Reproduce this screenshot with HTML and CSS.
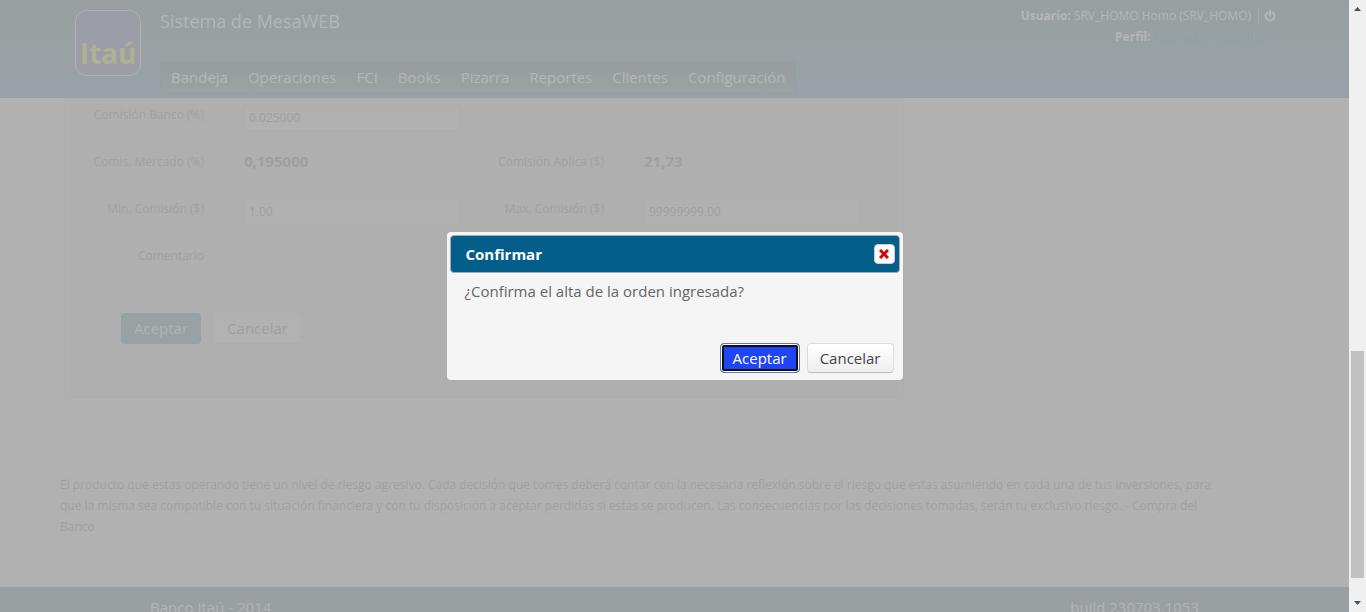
FILE: index.html
```html
<!DOCTYPE html>
<html lang="es">
<head>
<meta charset="utf-8">
<title>Sistema de MesaWEB</title>
<link rel="stylesheet" href="styles.css">
</head>
<body>
<div class="app">
  <header class="header">
    <svg class="logo" viewBox="0 0 66 66" role="img" aria-label="Itaú">
      <rect x="0.5" y="0.5" width="65" height="65" rx="11" fill="#9b9da7" stroke="#b0b2b3"/>
      <text class="logo-text" x="33" y="54" text-anchor="middle">Itaú</text>
    </svg>
    <div class="brand">
      <h1 class="title">Sistema de MesaWEB</h1>
      <nav class="nav">
        <a href="#">Bandeja</a>
        <a href="#">Operaciones</a>
        <a href="#">FCI</a>
        <a href="#">Books</a>
        <a href="#">Pizarra</a>
        <a href="#">Reportes</a>
        <a href="#">Clientes</a>
        <a href="#">Configuración</a>
      </nav>
    </div>
    <div class="user">
      <div class="user-line">
        <span><b>Usuario:</b> SRV_HOMO Homo (SRV_HOMO)</span>
        <a class="logout" href="#" aria-label="Salir">
          <svg viewBox="0 0 12 12" width="12" height="12" fill="none" stroke="currentColor" stroke-width="2" stroke-linecap="round"><path d="M3.400 2.600a4.400 4.400 0 1 0 5.200 0M6 1v4.400"/></svg>
        </a>
      </div>
      <div><b>Perfil:</b> <a class="profile" href="#">OperadorMesaDinero</a></div>
    </div>
  </header>

  <main class="main">
    <form class="panel">
      <div class="row">
        <label class="label" for="banco">Comisión Banco (%)</label>
        <input class="field" id="banco" type="text" value="0.025000">
      </div>
      <div class="row">
        <span class="label">Comis. Mercado (%)</span>
        <output class="value">0,195000</output>
        <span class="label">Comisión Aplica ($)</span>
        <output class="value">21,73</output>
      </div>
      <div class="row">
        <label class="label" for="min">Min. Comisión ($)</label>
        <input class="field" id="min" type="text" value="1.00">
        <label class="label" for="max">Max. Comisión ($)</label>
        <input class="field" id="max" type="text" value="99999999.00">
      </div>
      <div class="row">
        <span class="label">Comentario</span>
      </div>
      <div class="actions">
        <button class="btn btn-main" type="button">Aceptar</button>
        <button class="btn btn-muted" type="button">Cancelar</button>
      </div>
      <div class="panel-foot">
        <button class="btn-small" type="button" aria-label="Volver"></button>
      </div>
    </form>
    <p class="notice">El producto que estas operando tiene un nivel de riesgo agresivo. Cada decisión que tomes deberá contar con la necesaria reflexión sobre el riesgo que estas asumiendo en cada una de tus inversiones, para que la misma sea compatible con tu situación financiera y con tu disposición a aceptar perdidas si estas se producen. Las consecuencias por las decisiones tomadas, serán tu exclusivo riesgo. - Compra del Banco</p>
  </main>

  <footer class="footer">
    <span>Banco Itaú - 2014</span>
    <span>build 230703.1053</span>
  </footer>

  <div class="overlay">
    <section class="dialog" role="dialog" aria-labelledby="dialog-title">
      <div class="dialog-bar">
        <h2 id="dialog-title">Confirmar</h2>
        <button class="close" type="button" aria-label="Cerrar">
          <svg viewBox="0 0 10 10" width="10" height="10" stroke="#cd0a0a" stroke-width="3"><path d="M1 1l8 8M9 1l-8 8"/></svg>
        </button>
      </div>
      <p class="dialog-text">¿Confirma el alta de la orden ingresada?</p>
      <div class="dialog-actions">
        <button class="btn btn-focus" type="button">Aceptar</button>
        <button class="btn btn-light" type="button">Cancelar</button>
      </div>
    </section>
  </div>
</div>
<div class="scrollbar" aria-hidden="true">
  <svg width="7" height="4" viewBox="0 0 7 4"><path d="M3.500 0L7 4H0z" fill="#505050"/></svg>
  <div class="track"><div class="thumb"></div></div>
  <svg width="7" height="4" viewBox="0 0 7 4"><path d="M0 0h7L3.500 4z" fill="#505050"/></svg>
</div>
</body>
</html>
```
FILE: styles.css
```css
* { box-sizing: border-box; }

body {
  margin: 0;
  height: 100vh;
  display: flex;
  overflow: hidden;
  background: #b1b1b1;
  color: #a1a1a1;
  font: 400 12px/20px "Open Sans", sans-serif;
}

h1, h2, p { margin: 0; }
a { color: inherit; text-decoration: none; }
button, input { font-family: inherit; }

.app {
  position: relative;
  flex: 1;
  display: flex;
  flex-direction: column;
  overflow: hidden;
}

.header {
  flex: none;
  display: flex;
  align-items: flex-start;
  padding: 10px 73px 5px 75px;
  background: linear-gradient(#999fa1, #99a2a5 82%, #99a1a8 90%, #99a1a6);
  color: #b4b6b7;
}

.logo { width: 66px; height: 66px; flex: none; }
.logo-text { font: 700 28px "Open Sans", sans-serif; fill: #b0b193; }

.brand {
  margin-left: 19px;
  display: flex;
  flex-direction: column;
  gap: 29px;
}
.title { font-size: 18px; line-height: 22px; font-weight: 400; }

.nav {
  display: flex;
  gap: 20px;
  padding: 0 10px;
  border: 1px solid #979ea1;
  background: linear-gradient(#989d9f, #9aa2a4);
  font-size: 15px;
  line-height: 30px;
}

.user { margin-left: auto; text-align: right; line-height: 21px; margin-top: -5px; }
.user b { font-weight: 700; }
.user-line { display: flex; justify-content: flex-end; align-items: center; }
.logout {
  display: flex;
  align-items: center;
  height: 16px;
  margin-left: 7px;
  padding-left: 5px;
  border-left: 1px solid #a8acad;
}
.profile { color: #8aa2a9; }

.main { flex: 1 0 auto; padding: 0 60px; }

.panel {
  max-width: 840px;
  margin-left: 4px;
  padding: 7px 0 11px;
  display: flex;
  flex-direction: column;
  gap: 21px;
  background: #afafaf;
  border: 1px solid #adadad;
  border-top: 0;
  border-radius: 0 0 4px 4px;
}
.row {
  display: grid;
  grid-template-columns: 139px 216px 104px 216px;
  column-gap: 40px;
  height: 26px;
  align-items: start;
}
.label {
  display: flex;
  justify-content: flex-end;
  white-space: nowrap;
}
.field {
  width: 100%;
  height: 26px;
  padding: 0 4px 2px;
  border: 1px solid #adadad;
  border-radius: 4px;
  background: #b1b1b1;
  color: #a0a0a0;
  font-size: 12px;
}
.value { color: #a0a0a0; font-size: 15px; font-weight: 700; line-height: 18px; }

.btn {
  height: 31px;
  padding: 0 12px;
  border: 1px solid transparent;
  border-radius: 4px;
  font-size: 15px;
  line-height: 20px;
}
.actions { display: flex; gap: 13px; padding: 20px 0 0 56px; }
.btn-main { background: #99a1a4; color: #b1b3b4; }
.btn-muted { background: #b2b2b2; border-color: #b0b0b0; border-bottom-color: #acacac; color: #a0a0a0; }
.actions .btn { padding-bottom: 2px; }
.panel-foot { display: flex; justify-content: flex-end; padding-right: 24px; }
.btn-small {
  width: 60px;
  height: 21px;
  border: 1px solid #adadad;
  border-radius: 4px;
  background: #b0b0b0;
}

.notice { max-width: 1160px; margin-top: 76px; line-height: 21px; }

.footer {
  flex: none;
  display: flex;
  justify-content: space-between;
  margin-top: 50px;
  padding: 10px 150px;
  background: #9aa0a2;
  color: #b2b4b5;
  font-size: 15px;
}

.overlay {
  position: absolute;
  inset: 0;
  display: flex;
  align-items: center;
  justify-content: center;
}
.dialog {
  width: 456px;
  padding: 3px;
  border-radius: 4px;
  background: #f5f5f5;
  color: #666;
  font-size: 15px;
}
.dialog-bar {
  display: flex;
  align-items: center;
  justify-content: space-between;
  height: 38px;
  padding: 0 4px 0 15px;
  border: 1px solid #aaa;
  border-radius: 4px;
  background: #045e8a;
  color: #fff;
}
.dialog-bar h2 { font-size: 15px; font-weight: 700; }
.close {
  display: flex;
  align-items: center;
  justify-content: center;
  width: 21px;
  height: 20px;
  padding: 0;
  border: 1px solid #ccc;
  border-radius: 4px;
  background: #fff;
}
.dialog-text { padding: 8px 15px 0; }
.dialog-actions { display: flex; justify-content: flex-end; gap: 7px; padding: 42px 6px 4px; }
.btn-focus {
  height: 30px;
  border: 1px solid #6678b4;
  box-shadow: inset 0 0 0 1px #fff, inset 0 0 0 3px #101010;
  background: #1f45f5;
  color: #fff;
}
.btn-light {
  height: 30px;
  border-color: #ddd #ddd #bbb;
  background: linear-gradient(#fff, #eee);
  color: #444;
}

.scrollbar {
  flex: none;
  width: 17px;
  display: flex;
  flex-direction: column;
  align-items: center;
  padding: 7px 0;
  background: #f0f0f0;
}
.track { flex: 1; width: 13px; display: flex; flex-direction: column; justify-content: flex-end; padding-bottom: 23px; }
.thumb { height: 40%; background: #c1c1c1; }
```
